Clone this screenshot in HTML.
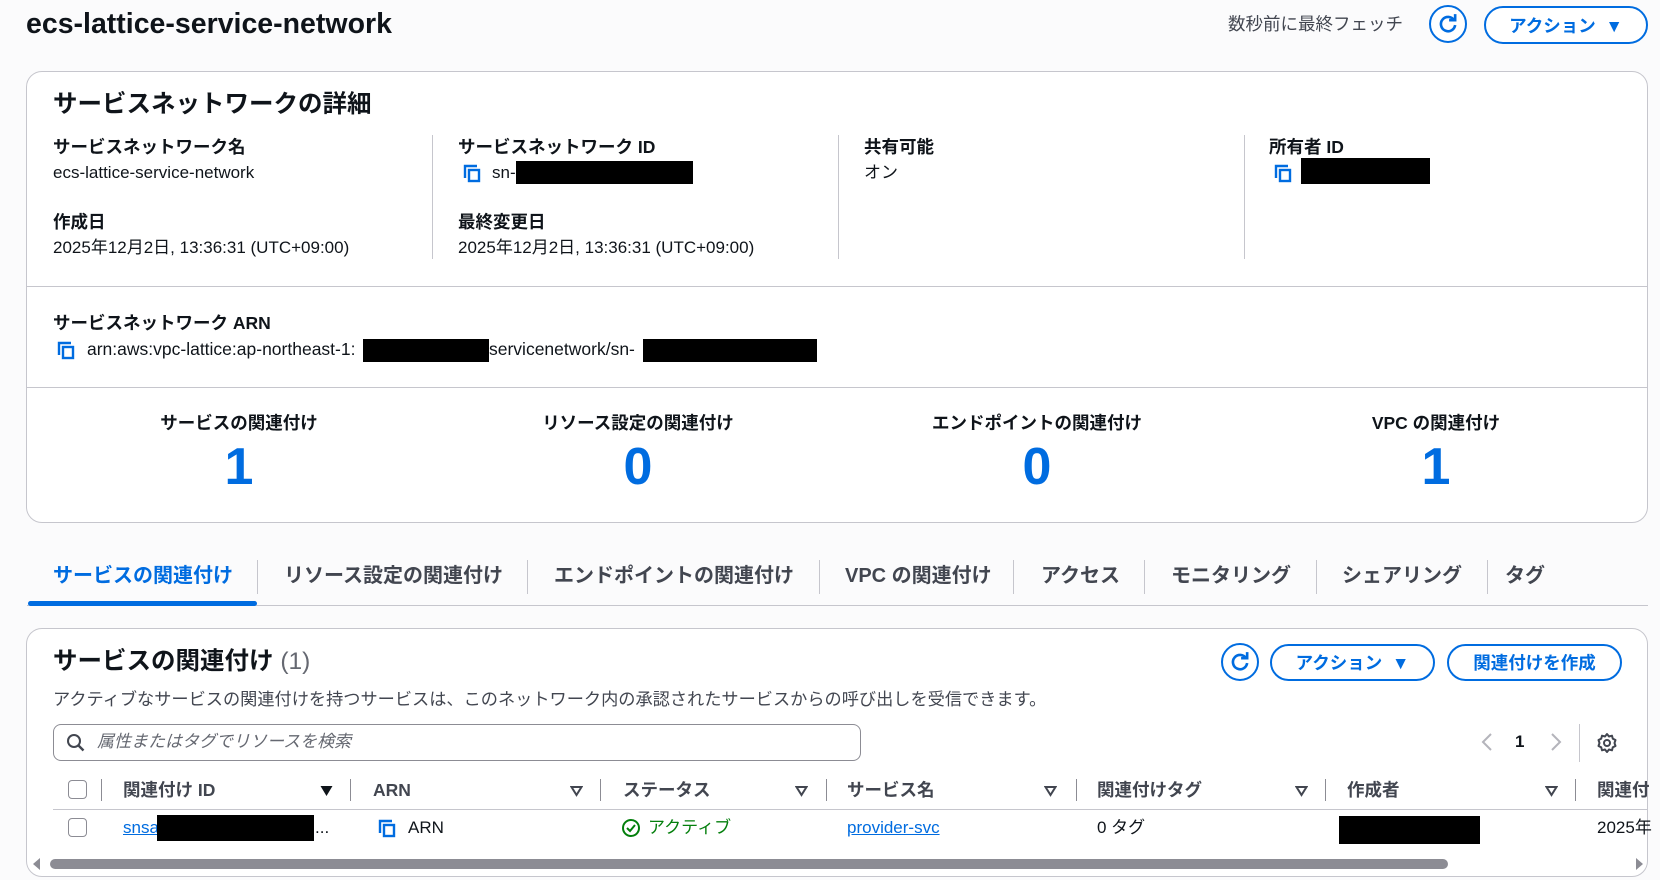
<!DOCTYPE html>
<html><head><meta charset="utf-8"><style>
*{box-sizing:border-box;margin:0;padding:0}
body{width:1660px;height:880px;overflow:hidden;background:#fbfbfc;font-family:"Liberation Sans","Noto Sans CJK JP",sans-serif;color:#0f141a;position:relative}
.a{position:absolute;white-space:nowrap;line-height:24px}
.b{font-weight:bold}
.card{position:absolute;background:#fff;border:1px solid #c6c6cd;border-radius:16px}
.hl{position:absolute;height:1px;background:#c6c6cd}
.vl{position:absolute;width:1px;background:#c6c6cd}
.blk{position:absolute;background:#000}
.btn{position:absolute;border:2px solid #006ce0;border-radius:20px;color:#006ce0;font-weight:bold;font-size:17.5px;display:flex;align-items:center;justify-content:center;background:#fff}
.circ{position:absolute;width:38px;height:38px;border:2px solid #006ce0;border-radius:50%;display:flex;align-items:center;justify-content:center;background:#fff}
.lbl{font-size:17.5px;font-weight:bold}
.val{font-size:17px}
.num{font-size:52px;font-weight:bold;color:#006ce0;transform:translateX(-50%);line-height:60px}
.cnt{font-size:17.5px;font-weight:bold;transform:translateX(-50%)}
.tab{font-size:20px;font-weight:bold;color:#424650;top:564px}
.th{font-size:17.5px;font-weight:bold;color:#424650;top:778px}
.td{font-size:17px;top:816px}
.tri{position:absolute;top:785px}
</style></head><body>
<svg width="0" height="0" style="position:absolute"><defs>
<symbol id="cp" viewBox="0 0 20 20"><path d="M3 15V3h12" fill="none" stroke="#006ce0" stroke-width="2.4"/><rect x="7" y="7" width="10" height="11" fill="none" stroke="#006ce0" stroke-width="2.4"/></symbol>
<symbol id="rf" viewBox="0 0 20 20"><path d="M15.5 6.5A6.5 6.5 0 1 0 16.5 11" fill="none" stroke="#006ce0" stroke-width="2.4"/><path d="M11 6.5h5.5V1" fill="none" stroke="#006ce0" stroke-width="2.4"/></symbol>
<symbol id="st" viewBox="0 0 12 12"><path d="M1 2h10L6 10z" fill="none" stroke="#424650" stroke-width="2"/></symbol>
</defs></svg>

<div class="a b" style="left:26px;top:7px;font-size:28.5px;line-height:34px">ecs-lattice-service-network</div>
<div class="a" style="left:1228px;top:12px;font-size:17.5px;color:#424650">数秒前に最終フェッチ</div>
<div class="circ" style="left:1429px;top:5px"><svg width="22" height="22"><use href="#rf"/></svg></div>
<div class="btn" style="left:1484px;top:6px;width:164px;height:38px">アクション&nbsp;&nbsp;▼</div>

<div class="card" style="left:26px;top:71px;width:1622px;height:452px"></div>
<div class="a b" style="left:53px;top:89px;font-size:24.5px;line-height:32px">サービスネットワークの詳細</div>
<div class="vl" style="left:432px;top:135px;height:124px"></div>
<div class="vl" style="left:838px;top:135px;height:124px"></div>
<div class="vl" style="left:1244px;top:135px;height:124px"></div>
<div class="a lbl" style="left:53px;top:135px">サービスネットワーク名</div>
<div class="a val" style="left:53px;top:161px">ecs-lattice-service-network</div>
<div class="a lbl" style="left:53px;top:210px">作成日</div>
<div class="a val" style="left:53px;top:236px">2025年12月2日, 13:36:31 (UTC+09:00)</div>
<div class="a lbl" style="left:458px;top:135px">サービスネットワーク ID</div>
<svg class="a" style="left:462px;top:163px" width="20" height="20"><use href="#cp"/></svg>
<div class="a val" style="left:492px;top:161px">sn-</div>
<div class="blk" style="left:516px;top:161px;width:177px;height:23px"></div>
<div class="a lbl" style="left:458px;top:210px">最終変更日</div>
<div class="a val" style="left:458px;top:236px">2025年12月2日, 13:36:31 (UTC+09:00)</div>
<div class="a lbl" style="left:864px;top:135px">共有可能</div>
<div class="a val" style="left:864px;top:161px">オン</div>
<div class="a lbl" style="left:1269px;top:135px">所有者 ID</div>
<svg class="a" style="left:1273px;top:163px" width="20" height="20"><use href="#cp"/></svg>
<div class="blk" style="left:1301px;top:158px;width:129px;height:26px"></div>
<div class="hl" style="left:27px;top:286px;width:1620px"></div>
<div class="a lbl" style="left:53px;top:311px">サービスネットワーク ARN</div>
<svg class="a" style="left:56px;top:340px" width="20" height="20"><use href="#cp"/></svg>
<div class="a val" style="left:87px;top:337px;font-size:17.5px">arn:aws:vpc-lattice:ap-northeast-1:</div>
<div class="blk" style="left:363px;top:339px;width:126px;height:23px"></div>
<div class="a val" style="left:489px;top:337px;font-size:17.5px">servicenetwork/sn-</div>
<div class="blk" style="left:643px;top:339px;width:174px;height:23px"></div>
<div class="hl" style="left:27px;top:387px;width:1620px"></div>
<div class="a cnt" style="left:239px;top:411px">サービスの関連付け</div>
<div class="a cnt" style="left:638px;top:411px">リソース設定の関連付け</div>
<div class="a cnt" style="left:1037px;top:411px">エンドポイントの関連付け</div>
<div class="a cnt" style="left:1436px;top:411px">VPC の関連付け</div>
<div class="a num" style="left:239px;top:437px">1</div>
<div class="a num" style="left:638px;top:437px">0</div>
<div class="a num" style="left:1037px;top:437px">0</div>
<div class="a num" style="left:1436px;top:437px">1</div>

<div class="a tab" style="left:53px;color:#006ce0">サービスの関連付け</div>
<div class="a tab" style="left:284px">リソース設定の関連付け</div>
<div class="a tab" style="left:554px">エンドポイントの関連付け</div>
<div class="a tab" style="left:845px">VPC の関連付け</div>
<div class="a tab" style="left:1041px">アクセス</div>
<div class="a tab" style="left:1171px">モニタリング</div>
<div class="a tab" style="left:1342px">シェアリング</div>
<div class="a tab" style="left:1505px">タグ</div>
<div class="vl" style="left:257px;top:560px;height:34px"></div>
<div class="vl" style="left:527px;top:560px;height:34px"></div>
<div class="vl" style="left:819px;top:560px;height:34px"></div>
<div class="vl" style="left:1013px;top:560px;height:34px"></div>
<div class="vl" style="left:1144px;top:560px;height:34px"></div>
<div class="vl" style="left:1316px;top:560px;height:34px"></div>
<div class="vl" style="left:1487px;top:560px;height:34px"></div>
<div class="hl" style="left:27px;top:605px;width:1621px"></div>
<div class="a" style="left:28px;top:601px;width:229px;height:5px;background:#006ce0;border-radius:3px"></div>

<div class="card" style="left:26px;top:628px;width:1622px;height:249px"></div>
<div class="a b" style="left:53px;top:646px;font-size:24.5px;line-height:32px">サービスの関連付け <span style="font-weight:normal;color:#656871">(1)</span></div>
<div class="a" style="left:53px;top:687px;font-size:17.2px;color:#424650">アクティブなサービスの関連付けを持つサービスは、このネットワーク内の承認されたサービスからの呼び出しを受信できます。</div>
<div class="circ" style="left:1221px;top:643px"><svg width="22" height="22"><use href="#rf"/></svg></div>
<div class="btn" style="left:1270px;top:644px;width:165px;height:37px">アクション&nbsp;&nbsp;▼</div>
<div class="btn" style="left:1447px;top:644px;width:175px;height:37px">関連付けを作成</div>
<div class="a" style="left:53px;top:724px;width:808px;height:37px;border:1px solid #8c8c94;border-radius:8px;background:#fff"></div>
<svg class="a" style="left:66px;top:733px" width="20" height="20"><circle cx="8" cy="8" r="6" fill="none" stroke="#424650" stroke-width="2"/><path d="M12.5 12.5l5 5" stroke="#424650" stroke-width="2.4"/></svg>
<div class="a" style="left:97px;top:730px;font-size:17px;font-style:italic;color:#656871">属性またはタグでリソースを検索</div>
<svg class="a" style="left:1480px;top:732px" width="14" height="20"><path d="M11 2L3 10l8 8" fill="none" stroke="#b4b4bb" stroke-width="2"/></svg>
<div class="a b" style="left:1515px;top:730px;font-size:17px">1</div>
<svg class="a" style="left:1549px;top:732px" width="14" height="20"><path d="M3 2l8 8-8 8" fill="none" stroke="#b4b4bb" stroke-width="2"/></svg>
<div class="vl" style="left:1579px;top:724px;height:38px"></div>
<svg class="a" style="left:1596px;top:732px" width="22" height="22" viewBox="0 0 22 22"><circle cx="11" cy="11" r="3" fill="none" stroke="#424650" stroke-width="2"/><path d="M11 2l2 2.5 3-.8.8 3L19.5 8l-1 3 1 3-2.7 1.3-.8 3-3-.8L11 20l-2-2.5-3 .8-.8-3L2.5 14l1-3-1-3 2.7-1.3.8-3 3 .8z" fill="none" stroke="#424650" stroke-width="2" stroke-linejoin="round"/></svg>

<div class="a" style="left:68px;top:780px;width:19px;height:19px;border:1.5px solid #8c8c94;border-radius:4px;background:#fff"></div>
<div class="vl" style="left:101px;top:779px;height:22px;background:#8c8c94"></div>
<div class="vl" style="left:350px;top:779px;height:22px;background:#8c8c94"></div>
<div class="vl" style="left:600px;top:779px;height:22px;background:#8c8c94"></div>
<div class="vl" style="left:826px;top:779px;height:22px;background:#8c8c94"></div>
<div class="vl" style="left:1076px;top:779px;height:22px;background:#8c8c94"></div>
<div class="vl" style="left:1325px;top:779px;height:22px;background:#8c8c94"></div>
<div class="vl" style="left:1575px;top:779px;height:22px;background:#8c8c94"></div>
<div class="a th" style="left:123px">関連付け ID</div>
<div class="a th" style="left:373px">ARN</div>
<div class="a th" style="left:623px">ステータス</div>
<div class="a th" style="left:847px">サービス名</div>
<div class="a th" style="left:1097px">関連付けタグ</div>
<div class="a th" style="left:1347px">作成者</div>
<div class="a th" style="left:1597px">関連付</div>
<svg class="tri" style="left:320px" width="13" height="12" viewBox="0 0 12 12"><path d="M0 1h12L6 11z" fill="#0f141a"/></svg>
<svg class="tri" style="left:570px" width="13" height="12"><use href="#st"/></svg>
<svg class="tri" style="left:795px" width="13" height="12"><use href="#st"/></svg>
<svg class="tri" style="left:1044px" width="13" height="12"><use href="#st"/></svg>
<svg class="tri" style="left:1295px" width="13" height="12"><use href="#st"/></svg>
<svg class="tri" style="left:1545px" width="13" height="12"><use href="#st"/></svg>
<div class="hl" style="left:53px;top:809px;width:1595px"></div>
<div class="a" style="left:68px;top:818px;width:19px;height:19px;border:1.5px solid #8c8c94;border-radius:4px;background:#fff"></div>
<div class="a td" style="left:123px;color:#006ce0;text-decoration:underline">snsa</div>
<div class="blk" style="left:157px;top:815px;width:157px;height:26px"></div>
<div class="a td" style="left:315px">...</div>
<svg class="a" style="left:377px;top:818px" width="20" height="20"><use href="#cp"/></svg>
<div class="a td" style="left:408px">ARN</div>
<svg class="a" style="left:621px;top:818px" width="20" height="20"><circle cx="10" cy="10" r="8" fill="none" stroke="#037f0c" stroke-width="2"/><path d="M6 10l3 3 5-6" fill="none" stroke="#037f0c" stroke-width="2"/></svg>
<div class="a td" style="left:648px;color:#037f0c">アクティブ</div>
<div class="a td" style="left:847px;color:#006ce0;text-decoration:underline">provider-svc</div>
<div class="a td" style="left:1097px">0 タグ</div>
<div class="blk" style="left:1339px;top:816px;width:141px;height:28px"></div>
<div class="a td" style="left:1597px">2025年</div>
<div class="a" style="left:50px;top:859px;width:1398px;height:10px;background:#8c8c94;border-radius:5px"></div>
<svg class="a" style="left:32px;top:858px" width="10" height="12"><path d="M8 0v12L1 6z" fill="#8c8c94"/></svg>
<svg class="a" style="left:1634px;top:858px" width="10" height="12"><path d="M2 0v12l7-6z" fill="#8c8c94"/></svg>
</body></html>
